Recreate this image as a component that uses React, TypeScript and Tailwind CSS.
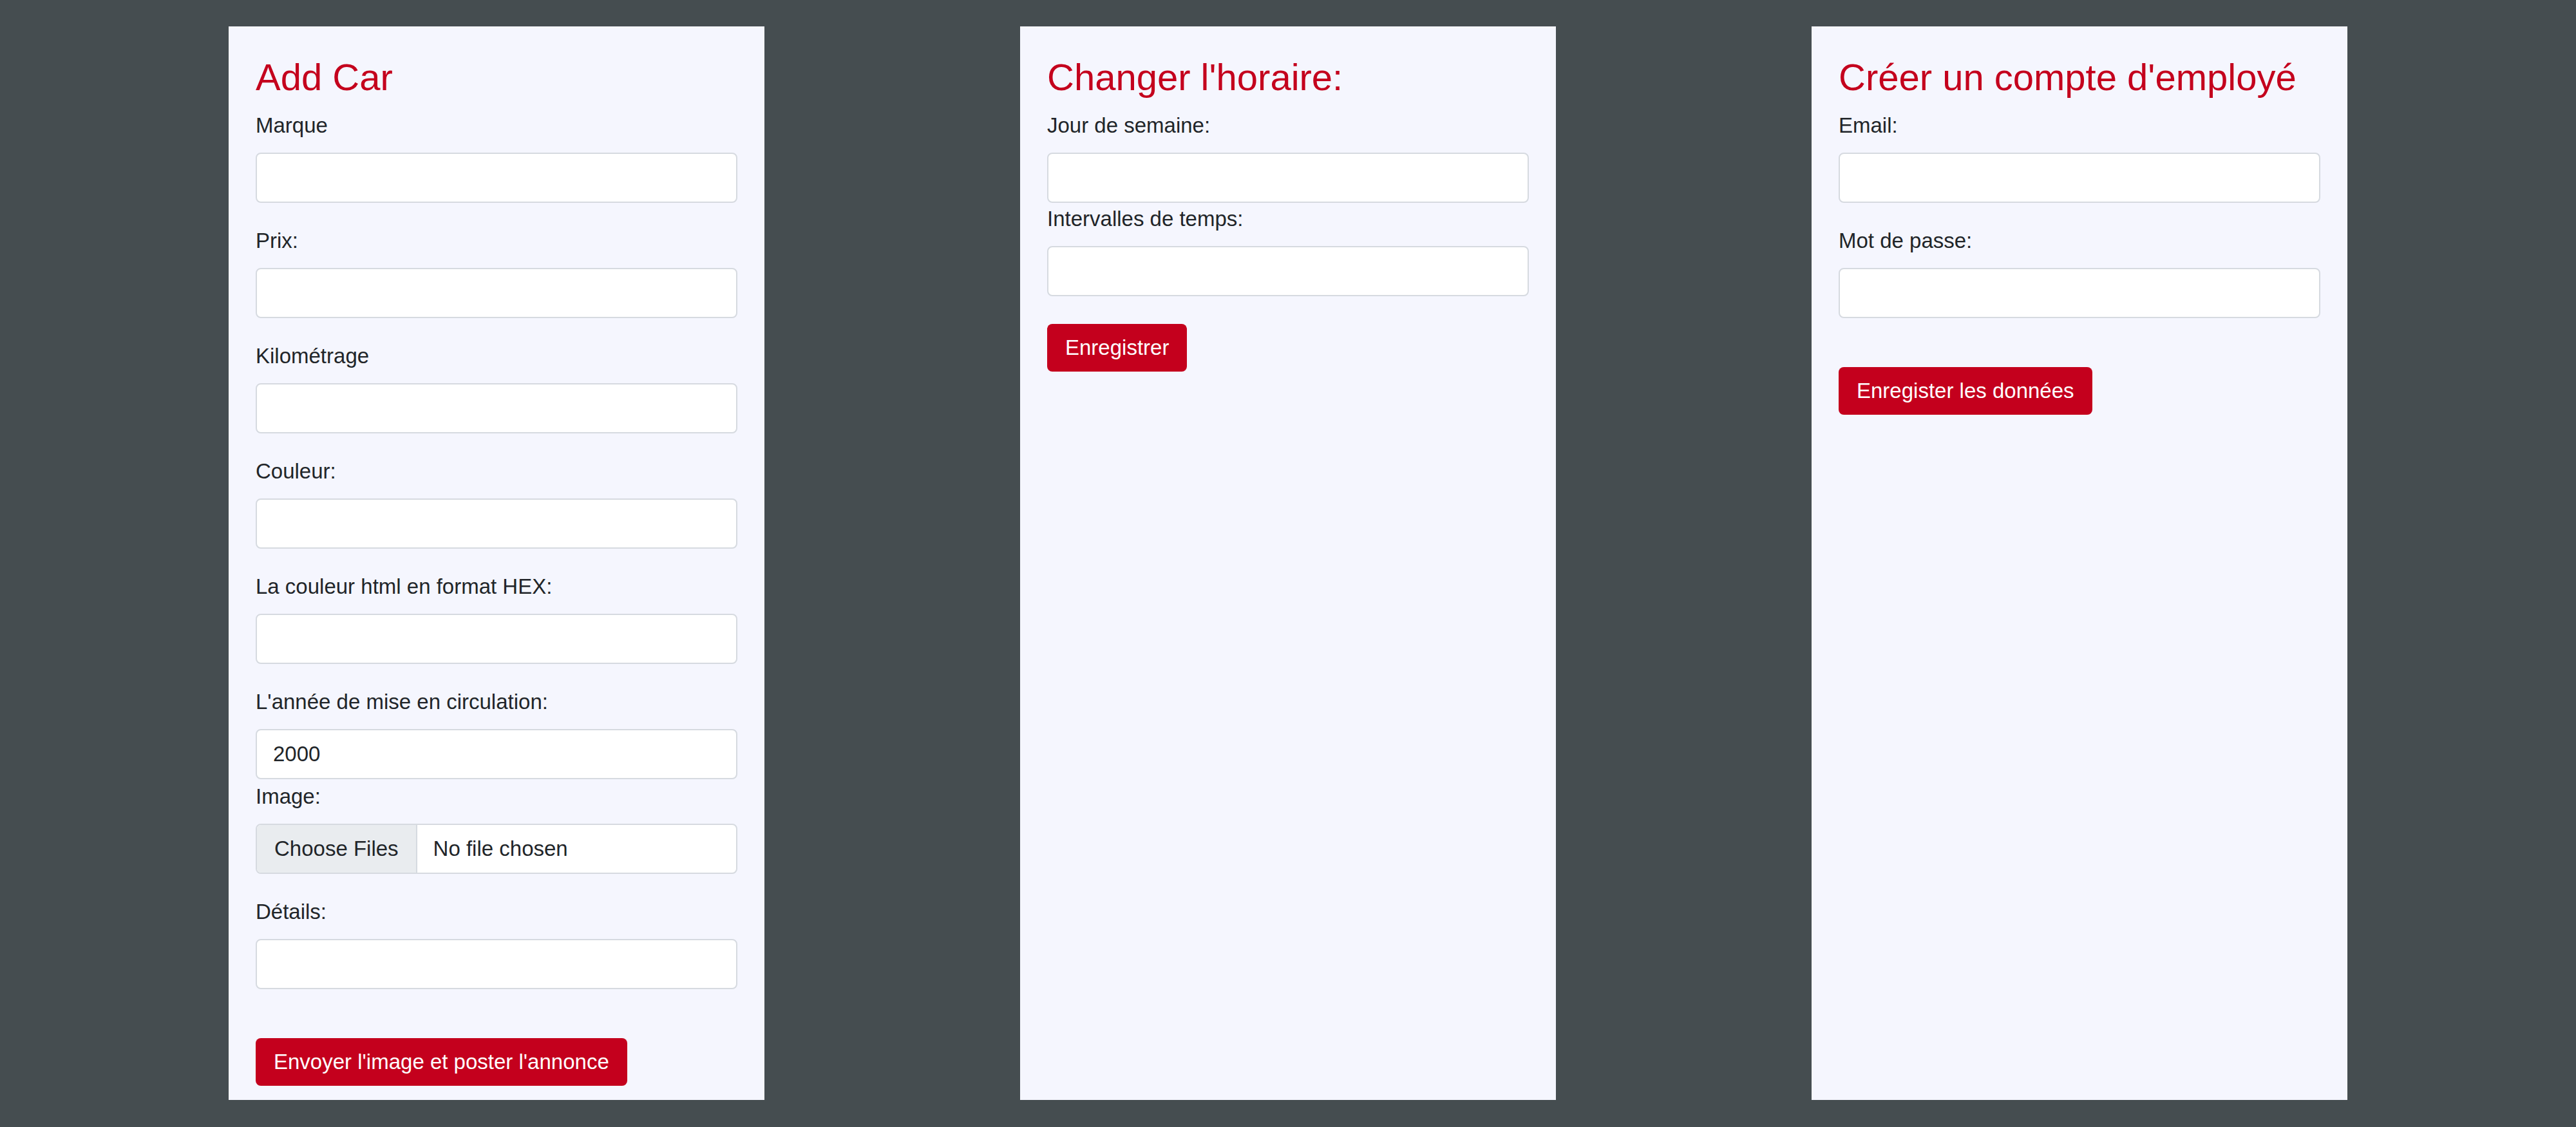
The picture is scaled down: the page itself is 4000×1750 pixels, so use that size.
import { ReactNode } from "react";

type FieldProps = {
  label: string;
  type?: string;
  defaultValue?: string;
  className?: string;
};

function Field({
  label,
  type = "text",
  defaultValue,
  className = "mb-[34px]",
}: FieldProps) {
  return (
    <div className={className}>
      <label className="block mb-[17px] text-[33px] leading-[50px] text-[#212529]">
        {label}
      </label>
      <input
        type={type}
        defaultValue={defaultValue}
        className="block w-full h-[78px] px-[25px] rounded-[8px] border-2 border-[#d6dae0] bg-white text-[33px] text-[#212529] outline-none"
      />
    </div>
  );
}

function FileField({ label }: { label: string }) {
  return (
    <div className="mb-[34px]">
      <div className="mb-[17px] text-[33px] leading-[50px] text-[#212529]">
        {label}
      </div>
      <label className="flex h-[78px] w-full overflow-hidden rounded-[8px] border-2 border-[#d6dae0] bg-white text-[33px] text-[#212529] cursor-pointer">
        <input type="file" multiple className="hidden" />
        <span className="flex items-center px-[27px] bg-[#e9ecef] border-r-2 border-[#d6dae0]">
          Choose Files
        </span>
        <span className="flex items-center pl-[25px]">No file chosen</span>
      </label>
    </div>
  );
}

// margins collapse with the field above, so mt is the whole gap
function SubmitButton({
  children,
  className,
}: {
  children: ReactNode;
  className: string;
}) {
  return (
    <div className={`flex ${className}`}>
      <button className="h-[74px] px-[28px] rounded-[8px] bg-[#c4001d] text-white text-[33px] leading-[50px] whitespace-nowrap">
        {children}
      </button>
    </div>
  );
}

type PanelProps = {
  title: string;
  children: ReactNode;
};

function Panel({ title, children }: PanelProps) {
  return (
    <section className="w-[832px] bg-[#f5f6fe] pt-[44px] px-[42px] pb-[22px]">
      <h2 className="mb-[15px] text-[58px] leading-[70px] font-normal text-[#c4001d]">
        {title}
      </h2>
      {children}
    </section>
  );
}

export default function App() {
  return (
    <div className="min-h-[1750px] bg-[#454d50] font-['Liberation_Sans',Arial,sans-serif]">
      <div className="flex justify-center gap-[397px] pt-[41px] pb-[43px]">
        {/* Add car */}
        <Panel title="Add Car">
          <Field label="Marque" />
          <Field label="Prix:" />
          <Field label="Kilométrage" />
          <Field label="Couleur:" />
          <Field label="La couleur html en format HEX:" />
          <Field
            label="L'année de mise en circulation:"
            defaultValue="2000"
            className="mb-[2px]"
          />
          <FileField label="Image:" />
          <Field label="Détails:" />
          <SubmitButton className="mt-[76px]">
            Envoyer l'image et poster l'annonce
          </SubmitButton>
        </Panel>

        {/* Schedule */}
        <Panel title="Changer l'horaire:">
          <Field label="Jour de semaine:" className="mb-0" />
          <Field label="Intervalles de temps:" className="mb-0" />
          <SubmitButton className="mt-[43px]">Enregistrer</SubmitButton>
        </Panel>

        {/* Employee account */}
        <Panel title="Créer un compte d'employé">
          <Field label="Email:" type="email" />
          <Field label="Mot de passe:" type="password" />
          <SubmitButton className="mt-[76px]">
            Enregister les données
          </SubmitButton>
        </Panel>
      </div>
    </div>
  );
}
